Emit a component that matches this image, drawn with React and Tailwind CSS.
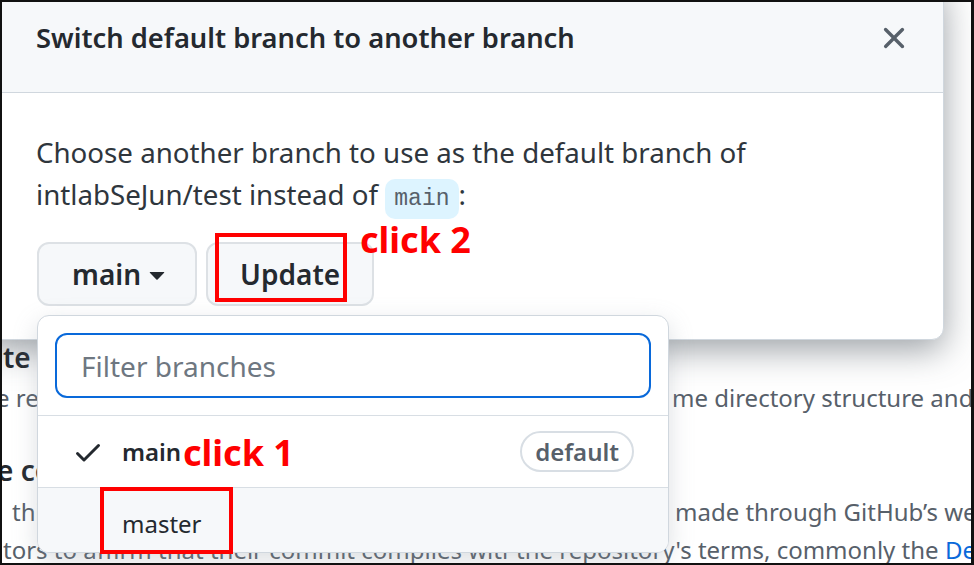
import React from "react";

const CheckIcon = () => (
  <svg width="32" height="32" viewBox="0 0 16 16" fill="#24292f">
    <path d="M13.78 4.22a.75.75 0 0 1 0 1.06l-7.25 7.25a.75.75 0 0 1-1.06 0L2.22 9.28a.751.751 0 0 1 .018-1.042.751.751 0 0 1 1.042-.018L6 10.94l6.72-6.72a.75.75 0 0 1 1.06 0Z" />
  </svg>
);

const XIcon = () => (
  <svg width="36" height="36" viewBox="0 0 16 16" fill="#57606a">
    <path d="M3.72 3.72a.75.75 0 0 1 1.06 0L8 6.94l3.22-3.22a.749.749 0 0 1 1.275.326.749.749 0 0 1-.215.734L9.06 8l3.22 3.22a.749.749 0 0 1-.326 1.275.749.749 0 0 1-.734-.215L8 9.06l-3.22 3.22a.751.751 0 0 1-1.042-.018.751.751 0 0 1-.018-1.042L6.94 8 3.72 4.78a.75.75 0 0 1 0-1.06Z" />
  </svg>
);

const CaretDown = () => (
  <svg width="32" height="32" viewBox="0 0 16 16" fill="#24292f">
    <path d="m4.427 7.427 3.396 3.396a.25.25 0 0 0 .354 0l3.396-3.396A.25.25 0 0 0 11.396 7H4.604a.25.25 0 0 0-.177.427Z" />
  </svg>
);

// settings page that sits behind the dialog, mostly covered
const PageBehind = () => (
  <div className="pt-[335px] whitespace-nowrap">
    <div className="h-[40px] flex items-center text-[28px] font-semibold text-[#24292f]">
      <span className="ml-px">te</span>
    </div>
    <div className="mt-[3px] h-[36px] flex items-center text-[24px] text-[#57606a]">
      <span className="w-[676px] shrink-0 ml-[-6px]">e re</span>
      <span>me directory structure and files.</span>
    </div>
    <div className="mt-[34px] h-[40px] flex items-center text-[28px] font-semibold text-[#24292f]">
      <span className="ml-[-5px]">e co</span>
    </div>
    <div className="mt-[4px] h-[36px] flex items-center text-[24px] text-[#57606a]">
      <span className="w-[663px] shrink-0 ml-[10px]">thi</span>
      <span>made through GitHub’s web interface.</span>
    </div>
    <div className="mt-px h-[37px] flex items-center gap-[7px] text-[24px] text-[#57606a]">
      <span className="w-[506px] shrink-0 ml-px overflow-hidden">
        tors to affirm that their commit complies with
      </span>
      <span>
        the repository's terms, commonly the{" "}
        <span className="text-[#0969da]">Developer Certificate of Origin</span>
      </span>
    </div>
  </div>
);

const Dialog = () => (
  <div className="absolute left-[-20px] top-[-20px] w-[962px] bg-white border border-[#d0d7de] rounded-[12px] shadow-[0_10px_34px_rgba(60,70,80,0.5)]">
    <div className="flex items-center justify-between bg-[#f6f8fa] border-b border-[#d0d7de] rounded-t-[12px] pl-[53px] pr-[31px] pt-[34px] pb-[33px]">
      <h2 className="text-[27.3px] leading-[42px] font-semibold text-[#24292f]">
        Switch default branch to another branch
      </h2>
      <button className="flex items-center">
        <XIcon />
      </button>
    </div>
    <div className="pl-[53px] pr-[40px] pt-[38px] pb-[33px]">
      <p className="max-w-[840px] text-[27.7px] leading-[42px] text-[#2f363d]">
        Choose another branch to use as the default branch of intlabSeJun/test instead of{" "}
        <code className="bg-[#ddf4ff] rounded-[10px] px-[9px] py-[7px] text-[23px] text-[#57606a] font-['Liberation_Mono',monospace]">
          main
        </code>
        :
      </p>
      <div className="mt-[22px] flex gap-[9px] ml-px">
        <button className="h-[64px] flex items-center pl-[33px] pr-[22px] bg-[#f6f8fa] border-2 border-[#dde1e5] rounded-[12px] text-[28px] font-semibold text-[#24292f]">
          main
          <CaretDown />
        </button>
        <button className="h-[64px] flex items-center px-[32px] bg-[#f6f8fa] border-2 border-[#dde1e5] rounded-[12px] text-[28px] font-semibold text-[#24292f]">
          Update
        </button>
      </div>
    </div>
  </div>
);

const BranchMenu = () => (
  <div className="absolute left-[35px] top-[313px] w-[632px] bg-white border border-[#d0d7de] rounded-[12px] overflow-hidden shadow-[0_8px_24px_rgba(140,149,159,0.3)]">
    <div className="px-[17px] py-[17px] border-b border-[#d8dee4]">
      <input
        placeholder="Filter branches"
        className="w-full h-[65px] px-[24px] border-2 border-[#0969da] rounded-[12px] text-[28px] text-[#24292f] placeholder:text-[#6e7781] outline-none"
      />
    </div>
    <div className="h-[72px] flex items-center pl-[34px] pr-[34px] border-b border-[#d8dee4]">
      <CheckIcon />
      <span className="ml-[18px] text-[24px] font-semibold text-[#24292f]">main</span>
      <span className="ml-auto h-[41px] flex items-center px-[13px] border-2 border-[#d8dee4] rounded-full text-[24px] font-semibold text-[#57606a]">
        default
      </span>
    </div>
    <div className="h-[64px] flex items-center pl-[84px] pt-[7px] bg-[#f6f8fa] text-[24px] text-[#24292f]">
      master
    </div>
  </div>
);

const Annotations = () => (
  <>
    <div className="absolute left-[213px] top-[231px] w-[132px] h-[69px] border-4 border-[#ff0000]" />
    <div className="absolute left-[358px] top-[212px] text-[36px] leading-[52px] font-bold text-[#ff0000]">
      click 2
    </div>
    <div className="absolute left-[98px] top-[485px] w-[133px] h-[67px] border-4 border-[#ff0000]" />
    <div className="absolute left-[181px] top-[425px] text-[36px] leading-[52px] font-bold text-[#ff0000]">
      click 1
    </div>
  </>
);

export default function App() {
  return (
    <div className="w-[974px] h-[565px] relative overflow-hidden bg-white border-2 border-r-[3px] border-[#111] font-['Noto_Sans',sans-serif]">
      <PageBehind />
      <Dialog />
      <BranchMenu />
      <Annotations />
    </div>
  );
}
